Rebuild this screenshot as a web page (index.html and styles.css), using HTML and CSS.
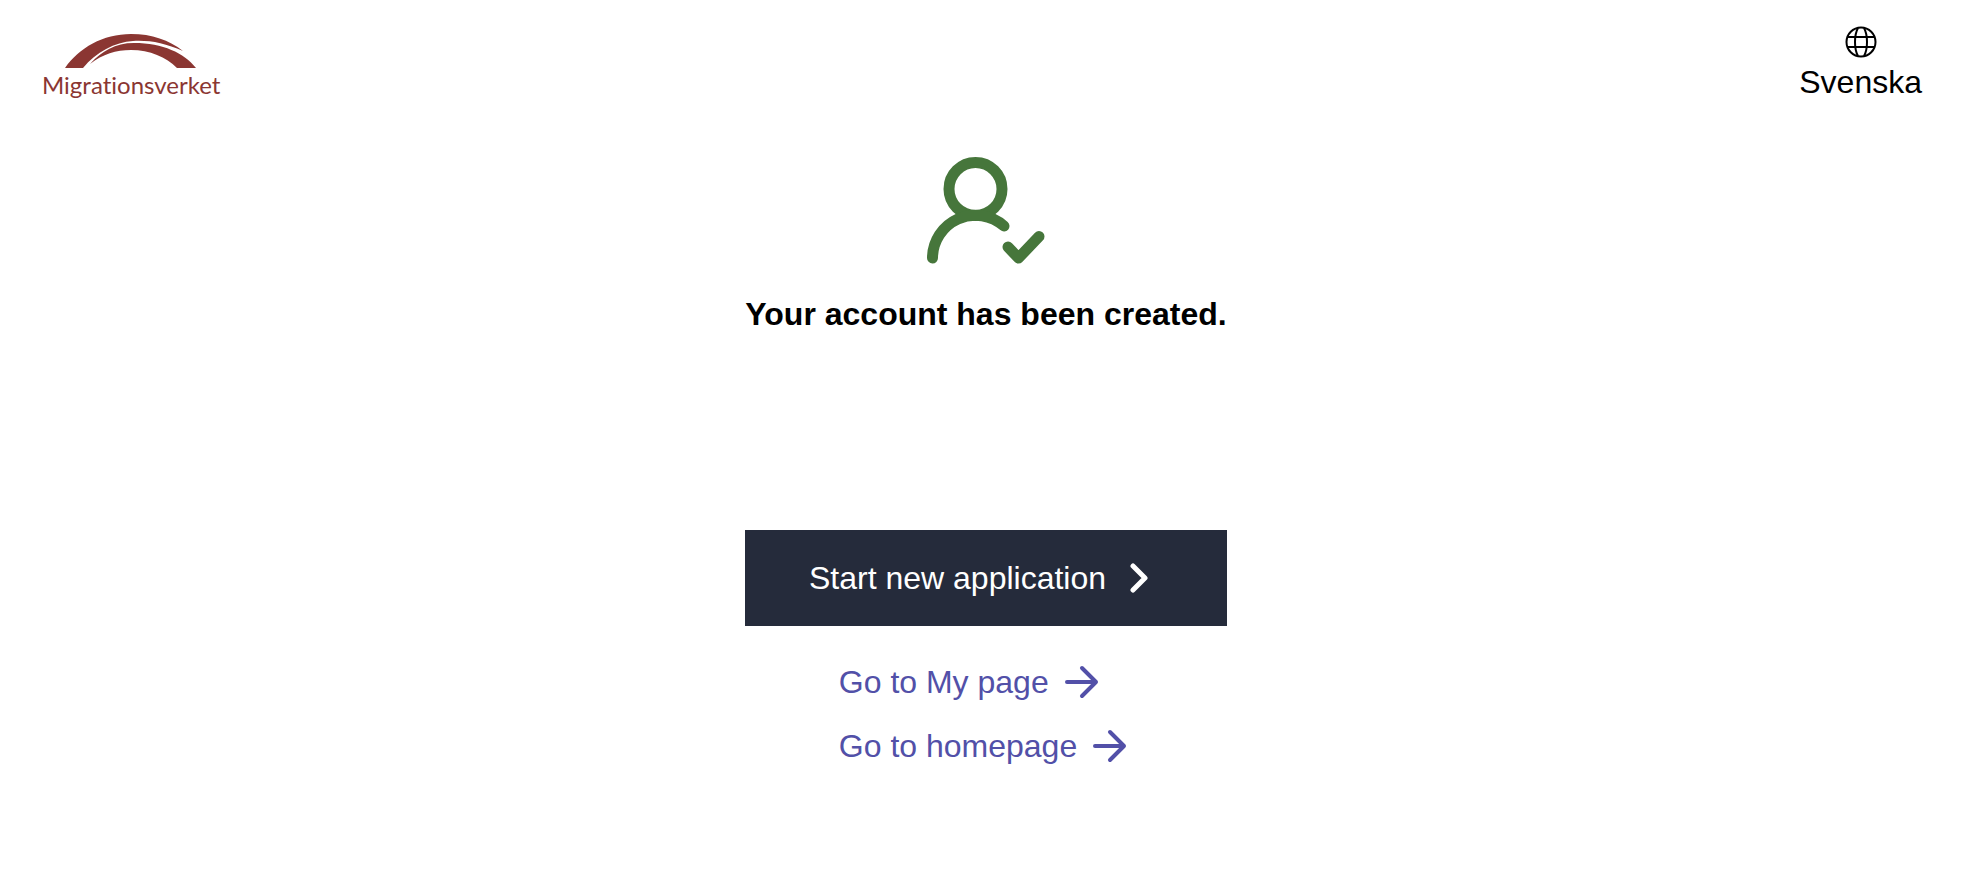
FILE: index.html
```html
<!DOCTYPE html>
<html lang="en">
<head>
    <meta charset="UTF-8">
    <meta name="viewport" content="width=device-width, initial-scale=1.0">
    <title>Migrationsverket</title>
    <link rel="stylesheet" href="styles.css">
</head>
<body>
    <header class="header">
        <a class="logo" href="#">
            <svg class="logo-arch" viewBox="0 0 132 36" aria-hidden="true">
                <path d="M0 35 C14 15 38 1 66 1 C87 1 104 7 118 18 C100 10 84 7 68 8 C50 9 31 19 18 35 Z"/>
                <path d="M25 31 C37 18 50 10 69 10 C98 10 119 20 131 35 H112 C101 24 85 17 66 17 C51 17 38 21 25 31 Z"/>
            </svg>
            <span class="logo-text">Migrationsverket</span>
        </a>
        <a class="language" href="#" lang="sv">
            <svg class="icon-globe" viewBox="0 0 32 32" aria-hidden="true">
                <circle cx="16" cy="16" r="14.5"/>
                <path d="M13 2 C9 9 9 23 13 30 M19 2 C23 9 23 23 19 30"/>
                <path d="M2.5 11 H29.5 M2.5 21 H29.5"/>
            </svg>
            <span>Svenska</span>
        </a>
    </header>

    <main class="content">
        <svg class="icon-user" viewBox="0 0 120 110" aria-hidden="true">
            <circle cx="49.5" cy="33" r="26.5"/>
            <path d="M6.5 102 A43 43 0 0 1 78 70"/>
            <path d="M82 91 L92.5 102 L113 80.5"/>
        </svg>
        <h1>Your account has been created.</h1>
        <button class="start" type="button">
            Start new application
            <svg class="icon-chevron" viewBox="0 0 18 30" aria-hidden="true">
                <path d="M3 3 L15 15 L3 27"/>
            </svg>
        </button>
        <nav class="links">
            <a href="#">
                Go to My page
                <svg class="icon-arrow" viewBox="0 0 34 34" aria-hidden="true">
                    <path d="M2 17 H31 M17 3 L31 17 L17 31"/>
                </svg>
            </a>
            <a href="#">
                Go to homepage
                <svg class="icon-arrow" viewBox="0 0 34 34" aria-hidden="true">
                    <path d="M2 17 H31 M17 3 L31 17 L17 31"/>
                </svg>
            </a>
        </nav>
    </main>
</body>
</html>
```
FILE: styles.css
```css
body {
    font-family: "Liberation Sans", Arial, Helvetica, sans-serif;
    font-size: 32px;
    line-height: 40px;
    margin: 0;
    background-color: #fff;
    color: #000;
}
a {
    text-decoration: none;
}
svg {
    display: block;
    flex: none;
}
.header {
    display: flex;
    justify-content: space-between;
    align-items: flex-start;
    padding: 26px 40px 0;
}
.logo {
    display: flex;
    flex-direction: column;
    align-items: center;
    padding: 7px 0 0 2px;
    color: #8b3632;
}
.logo-arch {
    width: 132px;
    height: 36px;
    fill: #8b3632;
}
.logo-text {
    font-family: Lato, sans-serif;
    font-size: 24px;
    line-height: 32px;
    font-variant-ligatures: none;
}
.language {
    display: flex;
    flex-direction: column;
    align-items: center;
    gap: 4px;
    color: #000;
}
.icon-globe {
    width: 32px;
    height: 32px;
    fill: none;
    stroke: #000;
    stroke-width: 2;
}
.content {
    display: flex;
    flex-direction: column;
    align-items: center;
    padding: 54px 0 40px 10px;
}
.icon-user {
    width: 120px;
    height: 110px;
    fill: none;
    stroke: #46763b;
    stroke-width: 11;
    stroke-linecap: round;
    stroke-linejoin: round;
}
h1 {
    margin: 28px 0 196px;
    font-size: 32px;
    line-height: 40px;
}
.start {
    display: flex;
    align-items: center;
    gap: 24px;
    box-sizing: border-box;
    width: 482px;
    max-width: 100%;
    padding: 28px 64px;
    border: none;
    background-color: #252b3b;
    color: #fff;
    font: inherit;
    cursor: pointer;
}
.icon-chevron {
    width: 18px;
    height: 30px;
    fill: none;
    stroke: #fff;
    stroke-width: 5;
    stroke-linecap: round;
    stroke-linejoin: round;
}
.links {
    display: flex;
    flex-direction: column;
    gap: 24px;
    margin-top: 36px;
    padding-right: 6px;
}
.links a {
    display: flex;
    align-items: center;
    gap: 16px;
    color: #5250a8;
}
.icon-arrow {
    width: 34px;
    height: 34px;
    fill: none;
    stroke: #5250a8;
    stroke-width: 4;
    stroke-linecap: round;
    stroke-linejoin: round;
}
```
